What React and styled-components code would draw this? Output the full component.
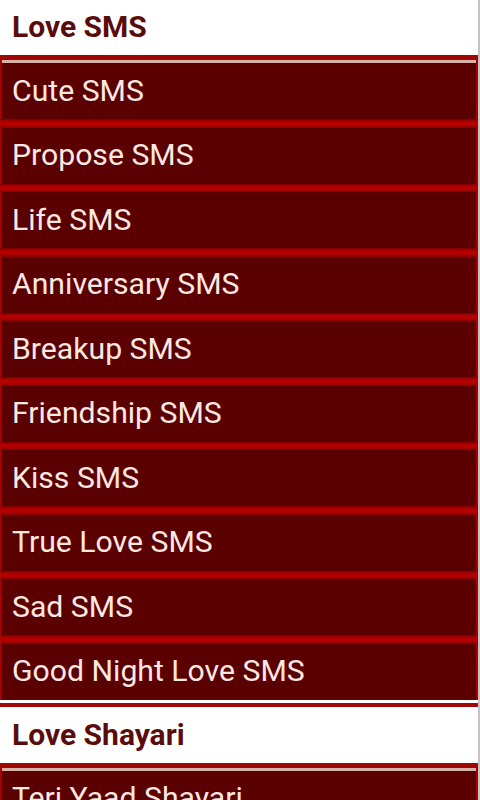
import React from 'react';
import styled, { createGlobalStyle } from 'styled-components';

const GlobalStyle = createGlobalStyle`
  html, body {
    margin: 0;
    padding: 0;
    background: #ffffff;
    overflow: hidden;
  }
  body {
    font-family: Roboto, "Liberation Sans", sans-serif;
  }
`;

const Screen = styled.div`
  position: relative;
  width: 480px;
  height: 800px;
  overflow: hidden;
  background: #ffffff;
`;

const Scroller = styled.div`
  margin-top: -1px;
  width: 478px;
  display: flex;
  flex-direction: column;
`;

const Group = styled.section`
  display: flex;
  flex-direction: column;
  padding-top: ${(p) => (p.$first ? '0' : '3px')};
`;

const Header = styled.div`
  height: ${(p) => (p.$first ? '61px' : '65px')};
  box-sizing: border-box;
  padding: 0 0 1px 12px;
  display: flex;
  align-items: center;
  background: #ffffff;
  border-top: ${(p) => (p.$first ? 'none' : '4px solid #a00808')};
  border-bottom: 5px solid #a00808;
  font-size: 30px;
  font-weight: 700;
  color: #5a0c0c;
`;

const List = styled.div`
  display: flex;
  flex-direction: column;
  background: #a80000;
  padding: 0 2px;
`;

const TopLine = styled.div`
  height: 3px;
  background: #d9b2a8;
`;

const Item = styled.div`
  height: 56px;
  box-sizing: border-box;
  padding: 0 0 2px 10px;
  display: flex;
  align-items: center;
  background: #5b0000;
  font-size: 30.2px;
  color: #fde9e2;
`;

const Divider = styled.div`
  height: 8.5px;
  margin: 0 -2px;
  background: linear-gradient(#7c0000 0%, #b00000 30%, #b80000 60%, #8a0000 100%);
`;

const ScrollEdge = styled.div`
  position: absolute;
  top: 0;
  right: 0;
  width: 2px;
  height: 800px;
  background: #c9c2c2;
`;

const groups = [
  {
    title: 'Love SMS',
    items: [
      'Cute SMS',
      'Propose SMS',
      'Life SMS',
      'Anniversary SMS',
      'Breakup SMS',
      'Friendship SMS',
      'Kiss SMS',
      'True Love SMS',
      'Sad SMS',
      'Good Night Love SMS',
    ],
  },
  {
    title: 'Love Shayari',
    items: ['Teri Yaad Shayari'],
  },
];

const App = () => {
  return (
    <Screen>
      <GlobalStyle />
      <Scroller>
        {groups.map((g, gi) => (
          <Group key={g.title} $first={gi === 0}>
            <Header $first={gi === 0}>{g.title}</Header>
            <List>
              <TopLine />
              {g.items.map((it, i) => (
                <React.Fragment key={it}>
                  {i > 0 && <Divider />}
                  <Item>{it}</Item>
                </React.Fragment>
              ))}
            </List>
          </Group>
        ))}
      </Scroller>
      <ScrollEdge />
    </Screen>
  );
};

export default App;
